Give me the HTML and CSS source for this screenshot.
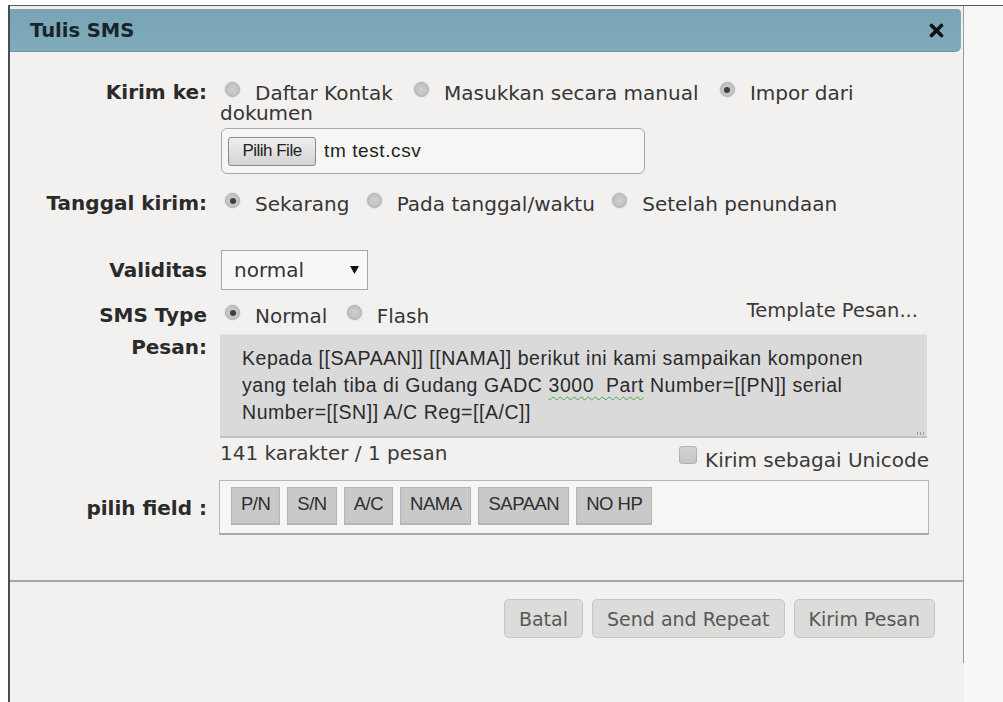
FILE: index.html
```html
<!DOCTYPE html>
<html lang="id">
<head>
<meta charset="utf-8">
<title>Tulis SMS</title>
<link rel="stylesheet" href="styles.css">
</head>
<body>
<div class="screen">
  <div class="dialog">
    <header class="titlebar">
      <h1 class="title">Tulis SMS</h1>
      <button class="close" type="button" aria-label="Tutup">
        <svg width="15" height="15" viewBox="0 0 15 15"><path d="M2.5 2.5 L12.5 12.5 M12.5 2.5 L2.5 12.5" stroke="#111" stroke-width="3.6" stroke-linecap="round"/></svg>
      </button>
    </header>

    <form class="form">
      <div class="row row-to">
        <span class="label">Kirim ke:</span>
        <div class="field options">
          <label class="opt"><span class="radio"></span>Daftar Kontak</label>
          <label class="opt"><span class="radio"></span>Masukkan secara manual</label>
          <label class="opt"><span class="radio on"></span>Impor dari dokumen</label>
        </div>
      </div>

      <div class="row row-file">
        <span class="label"></span>
        <div class="field">
          <div class="filebox">
            <span class="filebtn">Pilih File</span>
            <span class="filename">tm test.csv</span>
          </div>
        </div>
      </div>

      <div class="row row-date">
        <span class="label">Tanggal kirim:</span>
        <div class="field options">
          <label class="opt"><span class="radio on"></span>Sekarang</label>
          <label class="opt"><span class="radio"></span>Pada tanggal/waktu</label>
          <label class="opt"><span class="radio"></span>Setelah penundaan</label>
        </div>
      </div>

      <div class="row row-valid">
        <span class="label">Validitas</span>
        <div class="field">
          <div class="select">
            <span>normal</span>
            <svg width="9" height="8" viewBox="0 0 9 8"><path d="M0 0 H9 L4.5 8 Z" fill="#111"/></svg>
          </div>
        </div>
      </div>

      <div class="row row-type">
        <span class="label">SMS Type</span>
        <div class="field type-line">
          <div class="options">
            <label class="opt"><span class="radio on"></span>Normal</label>
            <label class="opt"><span class="radio"></span>Flash</label>
          </div>
          <span class="template">Template Pesan...</span>
        </div>
      </div>

      <div class="row row-msg">
        <span class="label">Pesan:</span>
        <div class="field">
          <div class="textarea">Kepada [[SAPAAN]] [[NAMA]] berikut ini kami sampaikan komponen
yang telah tiba di Gudang GADC <span class="spell">3000  Part</span> Number=[[PN]] serial
Number=[[SN]] A/C Reg=[[A/C]]</div>
          <div class="msg-meta">
            <span class="counter">141 karakter / 1 pesan</span>
            <label class="unicode"><span class="check"></span>Kirim sebagai Unicode</label>
          </div>
        </div>
      </div>

      <div class="row row-fields">
        <span class="label">pilih field :</span>
        <div class="field">
          <div class="fieldbox">
            <span class="tag">P/N</span>
            <span class="tag">S/N</span>
            <span class="tag">A/C</span>
            <span class="tag">NAMA</span>
            <span class="tag">SAPAAN</span>
            <span class="tag">NO HP</span>
          </div>
        </div>
      </div>
    </form>

    <footer class="actions">
      <button class="btn" type="button">Batal</button>
      <button class="btn" type="button">Send and Repeat</button>
      <button class="btn" type="button">Kirim Pesan</button>
    </footer>
  </div>
  <div class="side"></div>
</div>
</body>
</html>
```

FILE: styles.css
```css
* { box-sizing: border-box; }

html, body {
  margin: 0;
  height: 100%;
}

body {
  background: #ffffff;
  font-family: "DejaVu Sans", sans-serif;
  font-size: 20px;
  color: #363636;
  overflow: hidden;
}

/* outer frame */
.screen {
  display: flex;
  margin: 5px 0 0 8px;
  height: calc(100% - 5px);
  border-top: 1px solid #5c5c5c;
  border-left: 2px solid #4c4c4c;
  background: #f2f1ef;
}

.dialog {
  display: flex;
  flex-direction: column;
  width: 954px;
  height: 657px;
  border-right: 1px solid #9c9c9c;
}

.side {
  flex: 1;
  background: #f7f7f6;
}

/* title bar */
.titlebar {
  display: flex;
  align-items: center;
  height: 43px;
  margin: 3px 2px 0 0;
  padding: 0 17px 0 20px;
  background: linear-gradient(#78a4b5, #80abbb);
  border-bottom: 1px solid #6b95a5;
  border-radius: 0 4px 6px 0;
}

.title {
  flex: 1;
  margin: 0;
  font-size: 19.5px;
  font-weight: bold;
  color: #17252b;
}

.close {
  display: flex;
  padding: 0;
  border: 0;
  background: none;
}

/* form grid */
.form {
  padding-top: 30px;
}

.row {
  display: grid;
  grid-template-columns: 197px 709px;
  column-gap: 13px;
}

.label {
  text-align: right;
  font-weight: bold;
  color: #2a2a2a;
  line-height: 20px;
}

.options {
  line-height: 20px;
}

.opt {
  margin-right: 6px;
}

.row-to .opt {
  margin-right: 10px;
}

.radio {
  position: relative;
  display: inline-block;
  width: 15px;
  height: 15px;
  margin: 0 15px 0 5px;
  border: 1px solid #aeaeae;
  border-radius: 50%;
  background: radial-gradient(circle at 50% 50%, #cfcfcf 0, #c4c4c4 55%, #b9b9b9 100%);
  box-shadow: 0 0 0 1px #e4e4e4;
  vertical-align: 3px;
}

.radio.on::after {
  content: "";
  position: absolute;
  left: 3.5px;
  top: 3.5px;
  width: 6px;
  height: 6px;
  border-radius: 50%;
  background: #3e3e3e;
}

.row-file { margin-top: 5px; }

.filebox {
  display: flex;
  align-items: center;
  gap: 8px;
  width: 424px;
  height: 46px;
  margin-left: 1px;
  padding: 0 6px;
  border: 1px solid #a8a8a8;
  border-radius: 6px;
  background: #f6f6f5;
}

.filebtn {
  display: flex;
  align-items: center;
  justify-content: center;
  width: 88px;
  height: 29px;
  border: 1px solid #8c8c8c;
  border-radius: 3px;
  background: linear-gradient(#eeeeee, #d4d4d4);
  font-family: "Liberation Sans", sans-serif;
  font-size: 17px;
  letter-spacing: -0.5px;
  color: #222;
}

.filename {
  font-family: "Liberation Sans", sans-serif;
  font-size: 19px;
  letter-spacing: 0.6px;
  color: #222;
}

.row-date { margin-top: 19px; }

.row-valid {
  margin-top: 36px;
  align-items: center;
}

.select {
  display: flex;
  align-items: center;
  justify-content: space-between;
  width: 147px;
  height: 40px;
  margin-left: 1px;
  padding: 0 8px 0 12px;
  border: 1px solid #a6a6a6;
  background: #f8f8f8;
  color: #333;
}

.row-type { margin-top: 15px; }

.type-line {
  display: flex;
  justify-content: space-between;
}

.row-type .opt {
  margin-right: 8px;
}

.template {
  margin-right: 11px;
  margin-top: -4px;
  line-height: 20px;
  color: #3a3a3a;
  font-size: 19.5px;
}

.row-msg { margin-top: 8px; }
.row-msg .label { padding-top: 3px; }

.textarea {
  position: relative;
  width: 707px;
  height: 104px;
  padding: 10px 16px 0 22px;
  border-top: 1px solid #e4e4e4;
  border-bottom: 2px solid #c2c2c2;
  background: #dadada;
  font-family: "Liberation Sans", sans-serif;
  font-size: 19.5px;
  line-height: 27px;
  letter-spacing: 0.55px;
  color: #2a2a2a;
  white-space: pre-wrap;
}

/* resize grip */
.textarea::after {
  content: "";
  position: absolute;
  right: 2px;
  bottom: 1px;
  width: 8px;
  height: 3px;
  background: repeating-linear-gradient(90deg, #9a9a9a 0 1px, transparent 1px 3px);
}

.spell {
  text-decoration: underline wavy #4aa04a;
  text-decoration-thickness: 1px;
  text-underline-offset: 4px;
}

.msg-meta {
  display: flex;
  justify-content: space-between;
  align-items: flex-start;
}

.counter {
  margin-top: 5px;
  line-height: 20px;
  color: #3a3a3a;
}

.unicode {
  display: flex;
  align-items: flex-start;
  margin-top: 12px;
  line-height: 20px;
  color: #3a3a3a;
}

.check {
  width: 18px;
  height: 18px;
  margin: -4px 8px 0 0;
  border: 1px solid #b2b2b2;
  border-radius: 3px;
  background: linear-gradient(#d4d4d4, #c4c4c4);
}

.row-fields {
  margin-top: 10px;
  align-items: center;
}

.fieldbox {
  display: flex;
  gap: 7px;
  width: 710px;
  height: 55px;
  margin-left: -1px;
  padding: 6px 11px 0;
  border: 1px solid #b6b6b6;
  border-bottom: 2px solid #a9a9a9;
  background: #f6f6f5;
}

.tag {
  height: 38px;
  padding: 6px 9px 0;
  border: 1px solid #b4b4b4;
  border-bottom-width: 2px;
  background: #c9c9c9;
  font-family: "Liberation Sans", sans-serif;
  font-size: 18.5px;
  letter-spacing: -0.5px;
  line-height: 20px;
  color: #2e2e2e;
}

/* footer buttons */
.actions {
  display: flex;
  justify-content: flex-end;
  gap: 9px;
  margin-top: 45px;
  padding: 17px 28px 0 0;
  border-top: 2px solid #a6a6a6;
}

.btn {
  height: 39px;
  padding: 0 14px;
  border: 1px solid #c6c6c6;
  border-radius: 5px;
  background: #dcdcdb;
  font-family: "DejaVu Sans", sans-serif;
  font-size: 19px;
  color: #585858;
}
```
